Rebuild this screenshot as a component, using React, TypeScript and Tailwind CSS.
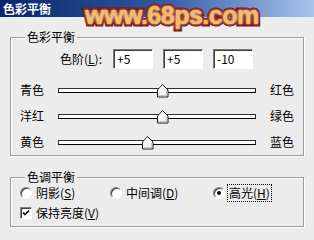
import React from 'react';

const font = { fontFamily: '"Noto Sans CJK SC", "Noto Sans", sans-serif' };

function Thumb({ left }: { left: number }) {
  return (
    <svg
      className="absolute -top-[5px]"
      style={{ left }}
      width="12"
      height="14"
      viewBox="0 0 12 14"
    >
      <polygon points="5.5,0.5 11,6 11,13 0.5,13 0.5,6" fill="#f4f4f4" stroke="#1a1a1a" strokeWidth="1" />
      <polyline points="1.5,6.5 5.5,1.8" fill="none" stroke="#ffffff" strokeWidth="1" />
      <polyline points="10,7 10,12 1.5,12" fill="none" stroke="#9a9a9a" strokeWidth="1" />
    </svg>
  );
}

function SliderRow({ left, right, pos }: { left: string; right: string; pos: number }) {
  return (
    <div className="flex h-[26px] items-center pl-[9px]">
      <span className="w-[24px] text-[12px] leading-none text-black">{left}</span>
      <div className="relative ml-[14px] h-[5px] w-[198px] border border-[#303030] border-b-black bg-white">
        <Thumb left={pos} />
      </div>
      <span className="ml-[14px] text-[12px] leading-none text-black">{right}</span>
    </div>
  );
}

function Field({ value }: { value: string }) {
  return (
    <div className="flex h-[20px] w-[40px] items-center border border-t-[#7a7a7a] border-l-[#7a7a7a] border-b-white border-r-white bg-white shadow-[inset_1px_1px_0_#404040] pl-[3px] text-[12px] leading-none text-black">
      {value}
    </div>
  );
}

function Radio({ checked }: { checked?: boolean }) {
  return (
    <div className="flex h-[12px] w-[12px] items-center justify-center rounded-full border border-t-[#808080] border-l-[#808080] border-b-white border-r-white bg-white shadow-[inset_1px_1px_0_#404040]">
      {checked && <div className="h-[4px] w-[4px] rounded-full bg-black" />}
    </div>
  );
}

function Group({ title, className, children }: { title: string; className: string; children: React.ReactNode }) {
  return (
    <div className={`relative mx-[10px] border border-[#9c9c9c] shadow-[1px_1px_0_#ffffff,inset_1px_1px_0_#ffffff] ${className}`}>
      <span className="absolute -top-[9px] left-[14px] bg-[#ececec] px-[2px] text-[12px] leading-[16px] text-black">
        {title}
      </span>
      {children}
    </div>
  );
}

export default function App() {
  return (
    <div className="relative h-[240px] w-[314px] overflow-hidden bg-[#ececec]" style={font}>
      {/* title bar */}
      <div className="flex h-[17px] items-center bg-gradient-to-r from-[#0a246a] via-[#2f58a0] to-[#a6c4ec] pl-[3px] text-[12px] font-bold leading-none text-white">
        色彩平衡
      </div>

      <Group title="色彩平衡" className="mt-[20px] h-[119px]">
        <div className="mt-[11px] flex items-center">
          <span className="ml-[49px] w-[53px] text-[12px] leading-none text-black">
            色阶(<span className="underline">L</span>):
          </span>
          <Field value="+5" />
          <div className="ml-[10px]">
            <Field value="+5" />
          </div>
          <div className="ml-[10px]">
            <Field value="-10" />
          </div>
        </div>
        <div className="mt-[8px]">
          <SliderRow left="青色" right="红色" pos={98} />
          <SliderRow left="洋红" right="绿色" pos={98} />
          <SliderRow left="黄色" right="蓝色" pos={83} />
        </div>
      </Group>

      <Group title="色调平衡" className="mt-[21px] h-[50px]">
        <div className="mt-[6px] flex h-[18px] items-center pl-[9px] text-[12px] leading-none text-black">
          <div className="flex w-[90px] items-center gap-[4px]">
            <Radio />
            <span>
              阴影(<span className="underline">S</span>)
            </span>
          </div>
          <div className="flex w-[103px] items-center gap-[4px]">
            <Radio />
            <span>
              中间调(<span className="underline">D</span>)
            </span>
          </div>
          <div className="flex items-center gap-[2px]">
            <Radio checked />
            <span className="border border-dotted border-black px-[1px] py-[2px]">
              高光(<span className="underline">H</span>)
            </span>
          </div>
        </div>
        <div className="mt-[2px] flex h-[18px] items-center gap-[4px] pl-[9px] text-[12px] leading-none text-black">
          <div className="flex h-[12px] w-[12px] items-center justify-center border border-t-[#808080] border-l-[#808080] border-b-white border-r-white bg-white shadow-[inset_1px_1px_0_#404040]">
            <svg width="8" height="8" viewBox="0 0 8 8">
              <polyline points="1,3.5 3,5.5 7,1.5" fill="none" stroke="#000" strokeWidth="1.6" />
            </svg>
          </div>
          <span>
            保持亮度(<span className="underline">V</span>)
          </span>
        </div>
      </Group>

      {/* watermark */}
      <div
        className="absolute left-[85px] top-[1px] text-[25px] font-bold leading-[28px] tracking-[-0.5px] text-[#f3bf5c] [-webkit-text-stroke:5px_#7d0f0f] [paint-order:stroke_fill] [text-shadow:0_0_3px_#ffffff]"
        style={{ fontFamily: '"Liberation Sans", Arial, sans-serif' }}
      >
        www.68ps.com
      </div>
    </div>
  );
}
